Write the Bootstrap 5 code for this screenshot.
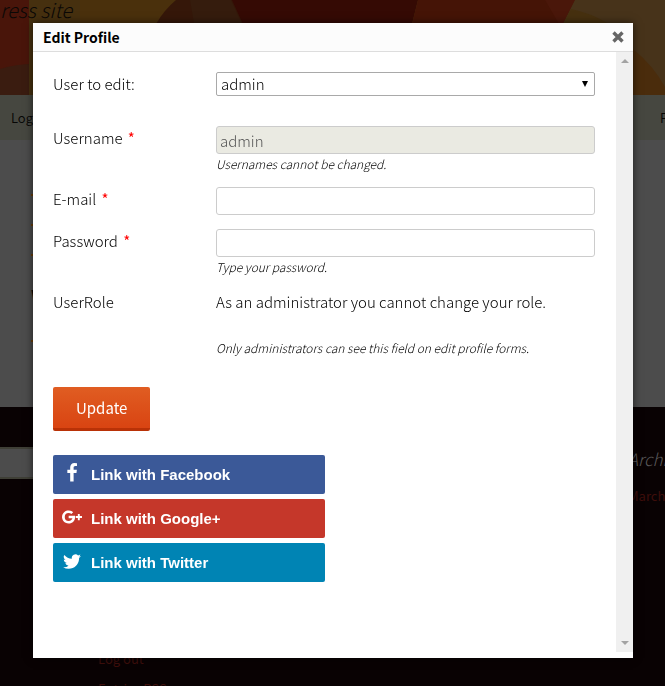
<!DOCTYPE html>
<html lang="en">
<head>
<meta charset="utf-8">
<meta name="viewport" content="width=device-width, initial-scale=1">
<title>Edit Profile</title>
<link href="https://cdn.jsdelivr.net/npm/bootstrap@5.3.0/dist/css/bootstrap.min.css" rel="stylesheet">
<style>
body{font-family:"Noto Sans CJK SC","Source Sans Pro",sans-serif;font-weight:300;font-size:15px;line-height:24px;color:#000;background:#090203}
.site{height:100vh;overflow:hidden}
.site-header{height:95px;background:#48300f;position:relative;overflow:hidden}
.site-header svg{position:absolute;inset:0;width:100%;height:100%}
.tagline{position:relative;font-size:20px;line-height:20px;font-weight:300;font-style:italic;color:#0b0806;margin:0}
.site-nav{height:45px;background:#464740;padding:0 0 0 11px}
.site-nav a{color:#060605;font-size:13px;font-weight:350;text-decoration:none}
.site-nav a+a{width:5px;overflow:hidden}
.site-main{height:267px;background:#4c4c4c;padding:54px 0 0 31px}
.site-main i{display:block;width:3px;height:2px;margin-bottom:28px;background:#6b3d08}
.site-main h2{font-size:18px;line-height:24px;font-weight:400;color:#060605;margin:28px 0 32px}
.site-footer{padding-top:40px}
.site-search{width:120px;height:32px;border:2px solid #3f3f36;border-left:0;background:#4c4c4c;border-radius:0;padding:0}
.site-archive{width:37px;white-space:nowrap}
.site-archive h2{font-size:17px;line-height:24px;font-style:italic;font-weight:300;color:#5a5959;margin:0 0 12px}
.site-footer a{color:#3e0e0b;font-size:13px;font-weight:400;text-decoration:none}
.site-meta{padding:136px 0 0 98px}
.site-meta a{line-height:30px}
.profile-modal{display:block;padding-left:1px;overflow:hidden}
.profile-modal .modal-dialog{max-width:600px;margin:23px auto}
.profile-modal .modal-content{border:0;border-radius:0;padding-bottom:6px;box-shadow:0 0 8px rgba(0,0,0,.6);color:inherit}
.profile-modal .modal-header{background:#fcfcfc;border-bottom:1px solid #ddd;border-radius:0;padding:0 9px 0 10px}
.profile-modal .modal-title{font-size:14px;line-height:28px;font-weight:700}
.close-x{border:0;background:none;padding:0;line-height:0}
.fields{padding:20px 21px 70px 20px}
.field-label{flex:0 0 163px}
.field-label span{color:#f00;font-weight:400;margin-left:2px}
.note{font-size:12px;line-height:19px;font-style:italic}
.fields .form-control{height:28px;padding:0 3px;border:1px solid #ccc;border-radius:3px;font-size:15px;font-weight:300;line-height:24px;color:#141412}
.fields .form-control:disabled{background:#eaeae2;color:#555}
.fields .form-select{height:24px;padding:0 20px 0 4px;border:1px solid #a9a9a9;border-radius:2px;font-size:15px;font-weight:300;line-height:22px;color:#000;background:#fff url("data:image/svg+xml,%3Csvg xmlns='http://www.w3.org/2000/svg' viewBox='0 0 6 6'%3E%3Cpath d='M0 0h6L3 6z'/%3E%3C/svg%3E") no-repeat right 6px center/6px 6px}
.gap-a{margin-bottom:30px}.gap-b{margin-bottom:14px}.gap-c{margin-bottom:24px}
.btn-update{height:44px;padding:0 23px;border:0;border-bottom:3px solid #b93207;border-radius:2px;color:#fff;font-size:15px;font-weight:400;line-height:40px;background:linear-gradient(#e05d22,#d94412)}
.btn-update:hover{color:#fff}
.social{width:272px;gap:5px}
.btn-social{height:39px;border:0;border-radius:2px;padding:0 9px;color:#fff;font:700 15px/39px "Liberation Sans",Arial,sans-serif;gap:9px}
.btn-social:hover{color:#fff}
.btn-social svg{width:20px;height:20px;margin-bottom:4px}
.facebook{background:#3b5998}.google{background:#c5372a}.twitter{background:#0084b4}
.track{flex:0 0 17px;background:#f0f0f0;padding:7px 0}
</style>
<script src="https://cdn.jsdelivr.net/npm/bootstrap@5.3.0/dist/js/bootstrap.bundle.min.js"></script>
</head>
<body>
<div class="site">
  <header class="site-header">
    <svg viewBox="0 0 665 95" preserveAspectRatio="none" aria-hidden="true">
      <path fill="#49150a" d="M0 0h29v95H0z"/><path fill="#3a1c10" d="M0 69q16-5 33-5v31H0z"/>
      <path fill="#46300f" d="M29 0h140v95H29z"/><path fill="#4a300c" d="M80 0h100l-24 24H80z"/>
      <path fill="#351709" d="M176 0h60l8 24h-88q8-14 20-24z"/><path fill="#351c0d" d="M190 0h41l11 24h-48z"/>
      <path fill="#350a04" d="M232 0h186l-6 24H243z"/><path fill="#451406" d="M418 0h157l-12 24H412z"/>
      <path fill="#4a170a" d="M545 0h30l-12 24h-4z"/>
      <path fill="#47331a" d="M575 0h90v95h-32V45L563 24z"/><path fill="#46300f" d="M571 9q20 4 38 15h-46z"/>
      <path fill="#4a2c0c" d="M633 49q20 16 32 38v8h-32z"/>
    </svg>
    <p class="tagline">ress site</p>
  </header>
  <nav class="site-nav d-flex justify-content-between align-items-center"><a href="#">Log</a><a href="#">P</a></nav>
  <main class="site-main"><i></i><i></i><i></i><h2>W</h2><i></i></main>
  <footer class="site-footer">
    <div class="d-flex justify-content-between">
      <input class="site-search" type="search" aria-label="Search">
      <div class="site-archive"><h2>Archives</h2><a href="#">March</a></div>
    </div>
    <div class="site-meta d-flex flex-column"><a href="#">Log out</a><a href="#">Entries RSS</a></div>
  </footer>
</div>

<div class="modal profile-modal" role="dialog" aria-labelledby="title">
  <div class="modal-dialog">
    <div class="modal-content">
      <div class="modal-header">
        <h1 class="modal-title" id="title">Edit Profile</h1>
        <button class="close-x" type="button" aria-label="Close"><svg width="12" height="12" viewBox="0 0 12 12"><path d="M1.500 1.500l9 9M10.500 1.500l-9 9" stroke="#666" stroke-width="3.400"/></svg></button>
      </div>
      <div class="d-flex">
        <form class="fields flex-grow-1">
          <div class="d-flex gap-a">
            <label class="field-label" for="who">User to edit:</label>
            <select class="form-select" id="who"><option>admin</option></select>
          </div>
          <div class="d-flex gap-b">
            <label class="field-label" for="name">Username <span>*</span></label>
            <div class="flex-grow-1"><input class="form-control" id="name" value="admin" disabled><div class="note">Usernames cannot be changed.</div></div>
          </div>
          <div class="d-flex gap-b">
            <label class="field-label" for="mail">E-mail <span>*</span></label>
            <input class="form-control" id="mail" type="email">
          </div>
          <div class="d-flex gap-b">
            <label class="field-label" for="pass">Password <span>*</span></label>
            <div class="flex-grow-1"><input class="form-control" id="pass" type="password"><div class="note">Type your password.</div></div>
          </div>
          <div class="d-flex gap-a">
            <div class="field-label">UserRole</div>
            <div><p class="gap-c">As an administrator you cannot change your role.</p><div class="note">Only administrators can see this field on edit profile forms.</div></div>
          </div>
          <button class="btn btn-update gap-c" type="button">Update</button>
          <div class="social d-flex flex-column">
            <button class="btn btn-social facebook d-flex align-items-center" type="button"><svg viewBox="0 0 1792 1792" fill="currentColor" aria-hidden="true"><path d="M1343 12v264h-157q-86 0-116 36t-30 108v189h293l-39 296h-254v759h-306v-759h-255v-296h255v-218q0-186 104-288.500t277-102.500q147 0 228 12z"/></svg>Link with Facebook</button>
            <button class="btn btn-social google d-flex align-items-center" type="button"><svg viewBox="0 0 24 24" fill="currentColor" aria-hidden="true"><path d="M8 10.500v3h4.500c-.4 1.600-1.800 3.200-4.500 3.200a4.700 4.700 0 0 1 0-9.400c1.400 0 2.500.5 3.200 1.200l2.200-2.200A7.900 7.900 0 1 0 8 19.900c4.600 0 7.700-3.200 7.700-7.900 0-.5 0-1-.1-1.500zM19 8.500h2.300v2.400H24v2.300h-2.700v2.600H19v-2.600h-2.500v-2.300H19z"/></svg>Link with Google+</button>
            <button class="btn btn-social twitter d-flex align-items-center" type="button"><svg viewBox="-1 -1 18 18" fill="currentColor" aria-hidden="true"><path d="M5.026 15c6.038 0 9.341-5.003 9.341-9.334 0-.14 0-.282-.006-.422A6.685 6.685 0 0 0 16 3.542a6.658 6.658 0 0 1-1.889.518 3.301 3.301 0 0 0 1.447-1.817 6.533 6.533 0 0 1-2.087.793A3.286 3.286 0 0 0 7.875 6.030a9.325 9.325 0 0 1-6.767-3.429 3.289 3.289 0 0 0 1.018 4.382A3.323 3.323 0 0 1 .64 6.575v.045a3.288 3.288 0 0 0 2.632 3.218 3.203 3.203 0 0 1-.865.115 3.230 3.230 0 0 1-.614-.057 3.283 3.283 0 0 0 3.067 2.277A6.588 6.588 0 0 1 .78 13.580a6.320 6.320 0 0 1-.78-.045A9.344 9.344 0 0 0 5.026 15z"/></svg>Link with Twitter</button>
          </div>
        </form>
        <div class="track d-flex flex-column justify-content-between align-items-center" aria-hidden="true">
          <svg width="8" height="4" viewBox="0 0 8 4"><path d="M4 0l4 4H0z" fill="#a3a3a3"/></svg>
          <svg width="8" height="4" viewBox="0 0 8 4"><path d="M0 0h8L4 4z" fill="#a3a3a3"/></svg>
        </div>
      </div>
    </div>
  </div>
</div>
</body>
</html>
